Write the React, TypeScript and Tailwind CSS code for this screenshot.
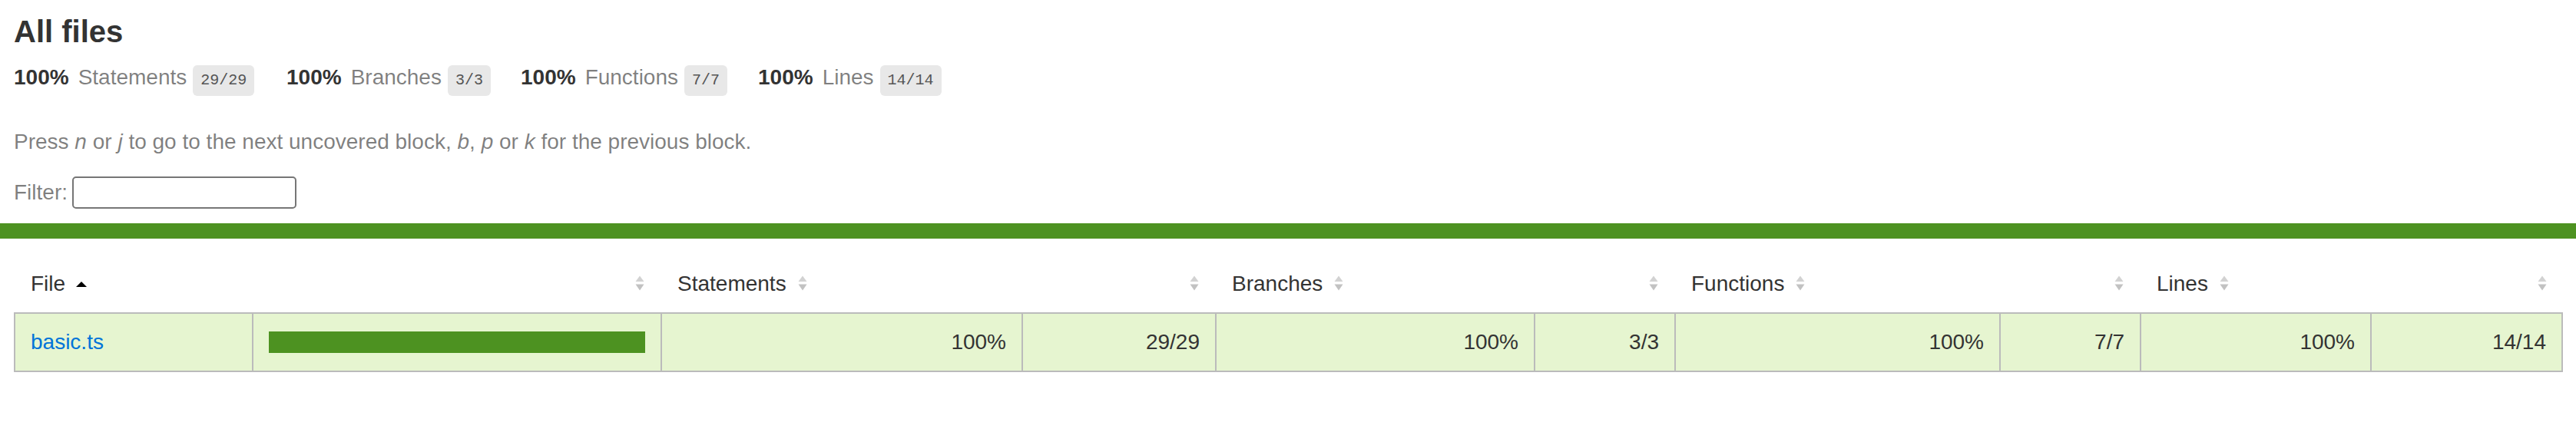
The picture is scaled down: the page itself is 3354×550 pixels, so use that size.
import React from "react";

function Sorter() {
  return (
    <span className="inline-block w-[14px] h-[20px] ml-[14px] align-baseline">
      <svg width="14" height="20" viewBox="0 0 14 20" className="block">
        <path d="M1.5 8 L7 0.5 L12.5 8 Z" fill="#d2d2d2" />
        <path d="M1.5 11.5 L12.5 11.5 L7 19.5 Z" fill="#c2c2c2" />
      </svg>
    </span>
  );
}

function SortedUp() {
  return (
    <span className="inline-block w-[14px] h-[20px] ml-[14px] align-baseline">
      <svg width="14" height="20" viewBox="0 0 14 20" className="block">
        <path d="M0 15 L7 8 L14 15 Z" fill="#000" />
      </svg>
    </span>
  );
}

const stats = [
  { label: "Statements", frac: "29/29", w: "w-[355px]" },
  { label: "Branches", frac: "3/3", w: "w-[305px]" },
  { label: "Functions", frac: "7/7", w: "w-[309px]" },
  { label: "Lines", frac: "14/14", w: "w-[300px]" },
];

const cols = [
  "w-[310px]",
  "w-[532px]",
  "w-[470px]",
  "w-[252px]",
  "w-[415px]",
  "w-[183px]",
  "w-[423px]",
  "w-[183px]",
  "w-[300px]",
  "w-[251px]",
];

export default function App() {
  const cell =
    "bg-[rgb(230,245,208)] border-t-2 border-b-2 border-l-2 border-[#bbb] p-[20px] leading-[34px] text-right align-middle";
  const th = "font-normal whitespace-nowrap pl-[22px] pr-[20px] py-[20px] leading-[34px]";
  return (
    <div className="min-h-screen bg-white text-[#333] text-[28px] leading-[normal] font-['Liberation_Sans',Arial,sans-serif]">
      <div className="pl-[18px] pr-[20px] pt-[20px] pb-[19px]">
        <h1 className="text-[40px] font-bold leading-[42px] m-0">All files</h1>
        <div className="flex items-baseline mt-[23px]">
          {stats.map((s) => (
            <div key={s.label} className={`flex items-baseline shrink-0 ${s.w}`}>
              <span className="font-bold">100%</span>
              <span className="ml-[12px] text-black/50">{s.label}</span>
              <span className="ml-[8px] font-['Liberation_Mono',monospace] text-[20px] leading-[24px] px-[10px] py-[8px] bg-[#e8e8e8] text-[#555] rounded-[6px]">
                {s.frac}
              </span>
            </div>
          ))}
        </div>
        <p className="mt-[44px] text-black/50">
          Press <em>n</em> or <em>j</em> to go to the next uncovered block, <em>b</em>, <em>p</em> or{" "}
          <em>k</em> for the previous block.
        </p>
        <div className="mt-[29px] flex items-center gap-[6px] text-black/50">
          <span>Filter:</span>
          <input
            type="search"
            className="w-[292px] h-[42px] border-2 border-[#767676] rounded-[5px] bg-white px-[4px] text-[26px] text-[#333] outline-none"
          />
        </div>
      </div>
      <div className="h-[20px] bg-[rgb(77,146,33)]" />
      <div className="pl-[18px] pt-[22px]">
        <table className="w-[3319px] table-fixed border-separate border-spacing-0">
          <colgroup>
            {cols.map((c, i) => (
              <col key={i} className={c} />
            ))}
          </colgroup>
          <thead>
            <tr>
              <th className={`text-left ${th}`}>
                File
                <SortedUp />
              </th>
              <th className={`text-right ${th}`}>
                <Sorter />
              </th>
              {["Statements", "Branches", "Functions", "Lines"].map((h) => (
                <React.Fragment key={h}>
                  <th className={`text-left ${th}`}>
                    {h}
                    <Sorter />
                  </th>
                  <th className={`text-right ${th}`}>
                    <Sorter />
                  </th>
                </React.Fragment>
              ))}
            </tr>
          </thead>
          <tbody>
            <tr>
              <td className="bg-[rgb(230,245,208)] border-t-2 border-b-2 border-l-2 border-[#bbb] p-[20px] leading-[34px] text-left whitespace-nowrap align-middle">
                <a href="#" className="text-[#0074d9] no-underline">
                  basic.ts
                </a>
              </td>
              <td className="bg-[rgb(230,245,208)] border-t-2 border-b-2 border-l-2 border-[#bbb] p-[20px] leading-[0] align-middle">
                <div className="h-[28px] w-full bg-[rgb(77,146,33)]" />
              </td>
              <td className={cell}>100%</td>
              <td className={cell}>29/29</td>
              <td className={cell}>100%</td>
              <td className={cell}>3/3</td>
              <td className={cell}>100%</td>
              <td className={cell}>7/7</td>
              <td className={cell}>100%</td>
              <td className={`${cell} border-r-2`}>14/14</td>
            </tr>
          </tbody>
        </table>
      </div>
    </div>
  );
}
